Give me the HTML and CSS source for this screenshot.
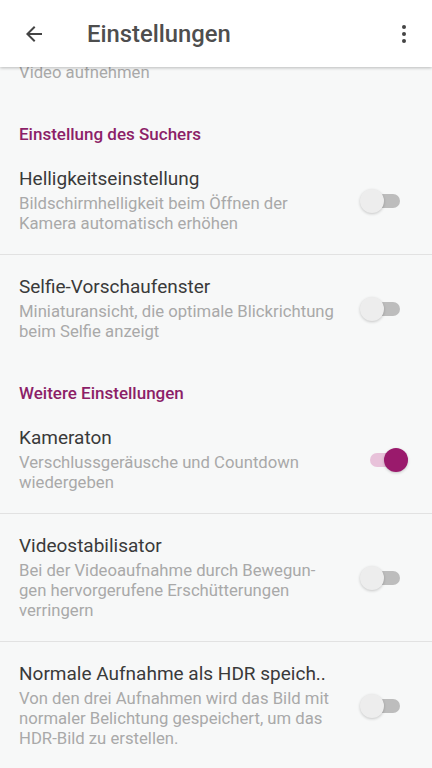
FILE: index.html
```html
<!DOCTYPE html>
<html lang="de">
<head>
    <meta charset="UTF-8">
    <title>Einstellungen</title>
    <link rel="stylesheet" href="styles.css">
</head>
<body>
    <header class="appbar">
        <svg class="back" width="24" height="24" viewBox="0 0 24 24">
            <path d="M20 11H7.83l5.59-5.59L12 4l-8 8 8 8 1.41-1.41L7.83 13H20v-2z" fill="#444"/>
        </svg>
        <h1>Einstellungen</h1>
        <svg class="more" width="24" height="24" viewBox="0 0 24 24">
            <circle cx="12" cy="5" r="2" fill="#444"/>
            <circle cx="12" cy="12" r="2" fill="#444"/>
            <circle cx="12" cy="19" r="2" fill="#444"/>
        </svg>
    </header>

    <main class="list">
        <div class="row row-cut">
            <div class="text">
                <p class="sub">Video aufnehmen</p>
            </div>
        </div>

        <h2 class="section">Einstellung des Suchers</h2>

        <div class="row divided">
            <div class="text">
                <p class="title">Helligkeitseinstellung</p>
                <p class="sub">Bildschirmhelligkeit beim Öffnen der Kamera automatisch erhöhen</p>
            </div>
            <div class="switch"><span class="thumb"></span></div>
        </div>

        <div class="row">
            <div class="text">
                <p class="title">Selfie-Vorschaufenster</p>
                <p class="sub">Miniaturansicht, die optimale Blickrichtung beim Selfie anzeigt</p>
            </div>
            <div class="switch"><span class="thumb"></span></div>
        </div>

        <h2 class="section">Weitere Einstellungen</h2>

        <div class="row divided">
            <div class="text">
                <p class="title">Kameraton</p>
                <p class="sub">Verschlussgeräusche und Countdown wiedergeben</p>
            </div>
            <div class="switch on"><span class="thumb"></span></div>
        </div>

        <div class="row divided">
            <div class="text">
                <p class="title">Videostabilisator</p>
                <p class="sub">Bei der Videoaufnahme durch Bewegun-<br>gen hervorgerufene Erschütterungen verringern</p>
            </div>
            <div class="switch"><span class="thumb"></span></div>
        </div>

        <div class="row">
            <div class="text">
                <p class="title">Normale Aufnahme als HDR speich..</p>
                <p class="sub">Von den drei Aufnahmen wird das Bild mit normaler Belichtung gespeichert, um das HDR-Bild zu erstellen.</p>
            </div>
            <div class="switch"><span class="thumb"></span></div>
        </div>
    </main>
</body>
</html>
```

FILE: styles.css
```css
:root {
    --accent: #8c1f68;
    --background: #f7f8f8;
    --title: #3a3a3a;
    --sub: #a9a9a9;
    --divider: #e2e2e2;
}

body {
    margin: 0;
    background: var(--background);
    font-family: Roboto, 'Noto Sans', sans-serif;
    overflow: hidden;
}

.appbar {
    position: relative;
    z-index: 1;
    height: 67px;
    display: flex;
    align-items: center;
    padding: 0 16px 0 22px;
    background: #fff;
    box-shadow: 0 1px 3px rgba(0, 0, 0, 0.25);
}

.appbar h1 {
    flex: 1;
    margin: 0 0 0 41px;
    font-size: 23.8px;
    font-weight: 500;
    color: #4e4e4e;
}

.list {
    margin-top: -4px;
}

.row {
    display: flex;
    align-items: center;
    padding: 20px 0 20px 19px;
}

.row.divided {
    border-bottom: 1px solid var(--divider);
}

.row-cut {
    padding-top: 0;
}

.text {
    width: 320px;
}

.title {
    margin: 0;
    font-size: 19px;
    line-height: 24px;
    color: var(--title);
}

.sub {
    margin: 3px 0 0;
    font-size: 16.7px;
    line-height: 20px;
    color: var(--sub);
}

.row-cut .sub {
    margin: 0;
}

.section {
    margin: 0;
    padding: 21px 19px 3px;
    font-size: 17px;
    line-height: 20px;
    font-weight: 500;
    color: var(--accent);
}

.switch {
    position: relative;
    width: 38px;
    height: 14px;
    margin-left: 23px;
    border-radius: 7px;
    background: #bdbdbd;
}

.thumb {
    position: absolute;
    top: -5px;
    left: -2px;
    width: 24px;
    height: 24px;
    border-radius: 50%;
    background: #ededed;
    box-shadow: 0 1px 3px rgba(0, 0, 0, 0.2);
}

.switch.on {
    background: #e8c2da;
    margin-left: 31px;
}

.switch.on .thumb {
    left: 14px;
    background: #9a1a6c;
}
```
